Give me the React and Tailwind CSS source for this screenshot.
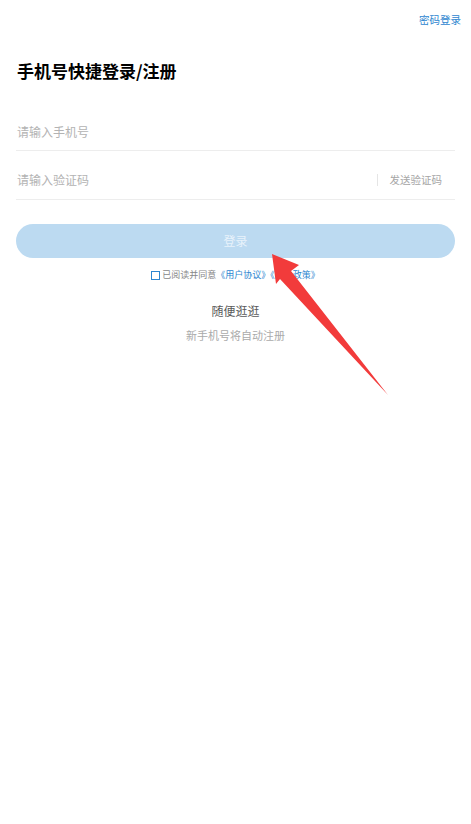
const App = () => {
  return (
    <div
      className="relative w-[471px] h-[824px] bg-white overflow-hidden"
      style={{ fontFamily: '"Noto Sans CJK SC", "Noto Sans", sans-serif' }}
    >
      <div className="flex justify-end pt-[12px] pr-[10px]">
        <span className="text-[10.5px] leading-[16px] text-[#2d86d0]">密码登录</span>
      </div>

      <h1 className="mt-[31px] ml-[17px] text-[17px] leading-[24px] font-bold text-black">
        手机号快捷登录/注册
      </h1>

      <div className="mx-[16px] mt-[30px]">
        <div className="flex items-center h-[38px] border-b border-[#ededed]">
          <span className="text-[12px] text-[#b3b3b3] pl-[1px]">请输入手机号</span>
        </div>
        <div className="flex items-center justify-between h-[49px] border-b border-[#ededed] pt-[9px]">
          <span className="text-[12px] text-[#b3b3b3] pl-[1px]">请输入验证码</span>
          <div className="flex items-center">
            <div className="w-px h-[12px] bg-[#e5e5e5] mr-[12px]" />
            <span className="text-[10.5px] text-[#a6a6a6] pr-[13px]">发送验证码</span>
          </div>
        </div>

        <button className="mt-[24px] w-full h-[34px] rounded-full bg-[#bcdaf1] text-[12px] text-[#e8f2fb]">
          登录
        </button>
      </div>

      <div className="flex items-center justify-center mt-[10px] text-[9px] leading-[14px]">
        <span className="w-[9px] h-[9px] border border-[#2d86d0] mr-[2px]" />
        <span className="text-[#888]">已阅读并同意</span>
        <span className="text-[#2d86d0]">《用户协议》《隐私政策》</span>
      </div>

      <div className="flex flex-col items-center mt-[20px]">
        <span className="text-[12px] leading-[18px] text-[#5a5a5a]">随便逛逛</span>
        <span className="mt-[7px] text-[11px] leading-[16px] text-[#aaa]">新手机号将自动注册</span>
      </div>

      <svg
        className="absolute left-0 top-0 pointer-events-none"
        width="471"
        height="824"
        viewBox="0 0 471 824"
      >
        <polygon
          points="272,254 299,265 291,271 388,395 280,279 276,284"
          fill="#f23b3b"
        />
      </svg>
    </div>
  );
};

export default App;
